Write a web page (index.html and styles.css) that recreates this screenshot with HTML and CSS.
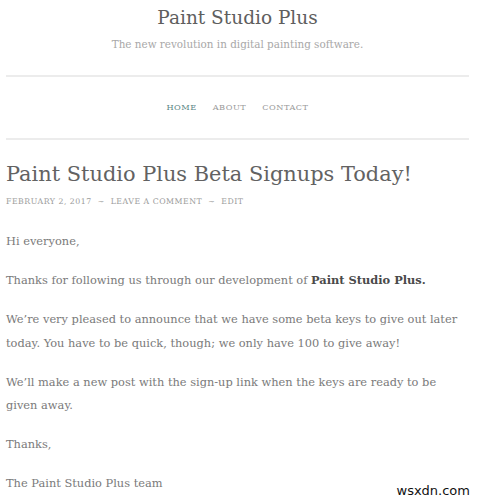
FILE: index.html
```html
<!DOCTYPE html>
<html>
<head>
<meta charset="utf-8">
<link rel="stylesheet" href="styles.css">
</head>
<body>
<div class="page">
  <header class="site-header">
    <h1 class="site-title">Paint Studio Plus</h1>
    <p class="site-tagline">The new revolution in digital painting software.</p>
  </header>
  <nav class="site-nav">
    <a class="nav-link active">HOME</a>
    <a class="nav-link">ABOUT</a>
    <a class="nav-link">CONTACT</a>
  </nav>
  <article class="post">
    <h2 class="post-title">Paint Studio Plus Beta Signups Today!</h2>
    <div class="post-meta">February 2, 2017 <span class="sep">~</span> Leave a comment <span class="sep">~</span> Edit</div>
    <div class="post-body">
      <p>Hi everyone,</p>
      <p>Thanks for following us through our development of <strong>Paint Studio Plus.</strong></p>
      <p>We’re very pleased to announce that we have some beta keys to give out later today. You have to be quick, though; we only have 100 to give away!</p>
      <p>We’ll make a new post with the sign-up link when the keys are ready to be given away.</p>
      <p>Thanks,</p>
      <p>The Paint Studio Plus team</p>
    </div>
  </article>
</div>
<div class="watermark">wsxdn.com</div>
</body>
</html>
```
FILE: styles.css
```css
html, body {
  margin: 0;
  padding: 0;
  background: #fff;
}
body {
  font-family: "DejaVu Serif", serif;
  overflow: hidden;
  height: 500px;
  position: relative;
}
.page {
  width: 463px;
  margin-left: 6px;
}
.site-header {
  text-align: center;
  padding-top: 6px;
  padding-bottom: 23px;
  border-bottom: 2px solid #ececec;
}
.site-title {
  margin: 0;
  font-size: 18.5px;
  line-height: 24px;
  font-weight: normal;
  color: #5e5e5e;
}
.site-tagline {
  margin: 6px 0 0;
  font-size: 10.4px;
  line-height: 16px;
  font-weight: 300;
  color: #a8a8a8;
}
.site-nav {
  display: flex;
  justify-content: center;
  gap: 16px;
  padding: 24px 0 25px;
  border-bottom: 2px solid #ececec;
  font-size: 8.2px;
  line-height: 12px;
  letter-spacing: 0.5px;
}
.nav-link {
  color: #9a9a9a;
}
.nav-link.active {
  color: #5b8585;
}
.post {
  padding-top: 20px;
}
.post-title {
  margin: 0;
  font-size: 20.9px;
  line-height: 28px;
  font-weight: normal;
  color: #626262;
}
.post-meta {
  margin-top: 8px;
  font-size: 7.8px;
  line-height: 12px;
  text-transform: uppercase;
  letter-spacing: 0.5px;
  color: #9b9b9b;
}
.post-meta .sep {
  margin: 0 3px;
}
.post-body {
  margin-top: 22px;
  font-size: 11.4px;
  line-height: 23.5px;
  color: #7a7a7a;
}
.post-body p {
  margin: 0 0 15.5px;
}
.post-body strong {
  color: #4a4a4a;
}
.watermark {
  position: absolute;
  right: 12px;
  bottom: 2px;
  font-family: "DejaVu Sans", sans-serif;
  font-size: 13px;
  color: #111;
}
```
